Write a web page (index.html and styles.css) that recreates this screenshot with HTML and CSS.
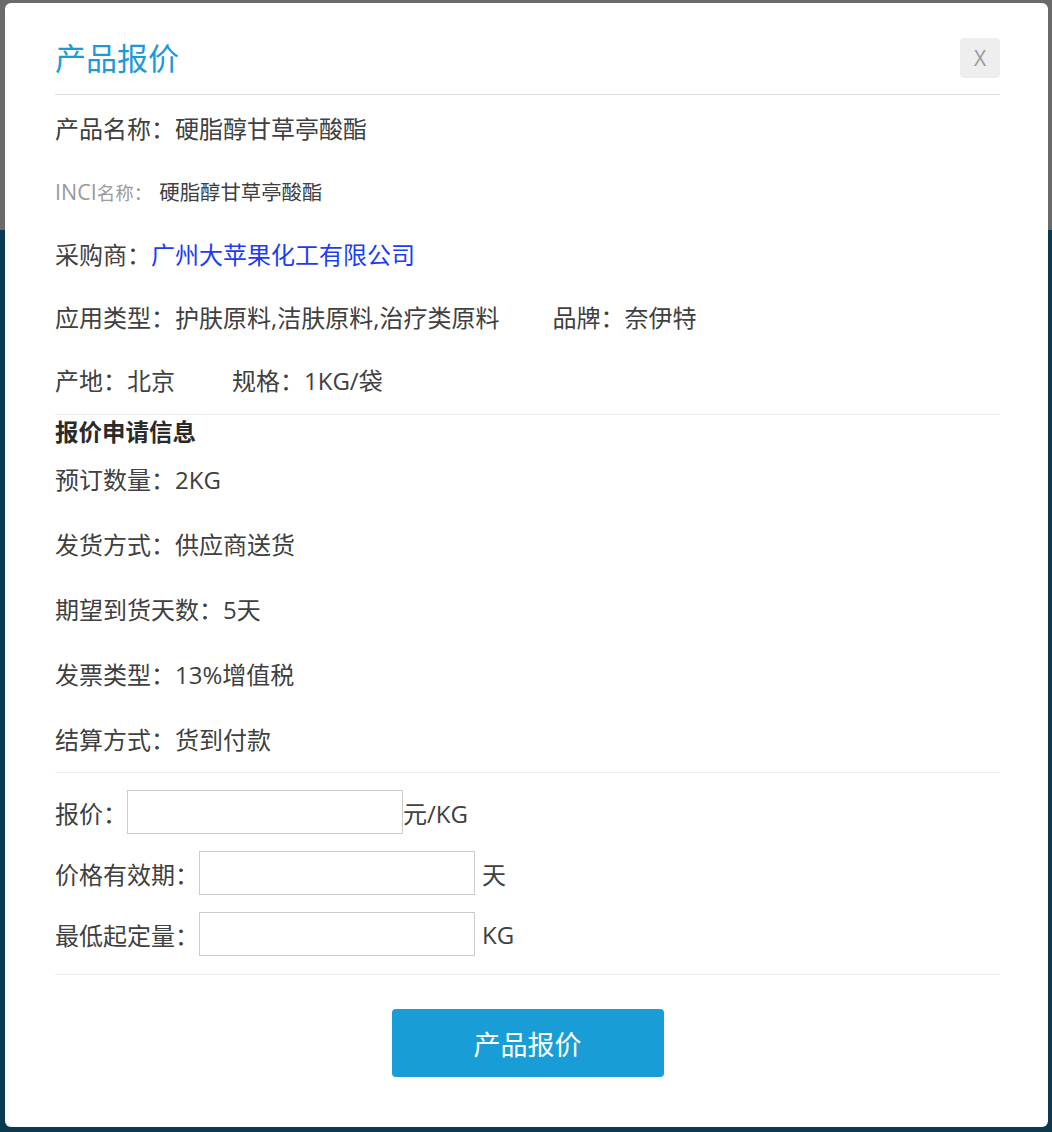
FILE: index.html
```html
<!DOCTYPE html>
<html lang="zh-CN">
<head>
<meta charset="utf-8">
<title>产品报价</title>
<link rel="stylesheet" href="styles.css">
</head>
<body>
<div class="backdrop">
  <div class="modal">
    <div class="modal-header">
      <h2 class="title">产品报价</h2>
      <button class="close" type="button">X</button>
    </div>
    <div class="info">
      <p class="row">产品名称：硬脂醇甘草亭酸酯</p>
      <p class="row inci"><span class="muted"><span class="latin">INCI</span>名称：</span><span class="inci-value">硬脂醇甘草亭酸酯</span></p>
      <p class="row">采购商：<a class="link" href="#">广州大苹果化工有限公司</a></p>
      <p class="row">应用类型：护肤原料,洁肤原料,治疗类原料<span class="sep sep-brand">品牌：奈伊特</span></p>
      <p class="row">产地：北京<span class="sep">规格：1KG/袋</span></p>
    </div>
    <div class="request">
      <h3 class="section-title">报价申请信息</h3>
      <p class="row">预订数量：2KG</p>
      <p class="row">发货方式：供应商送货</p>
      <p class="row">期望到货天数：5天</p>
      <p class="row">发票类型：13%增值税</p>
      <p class="row">结算方式：货到付款</p>
    </div>
    <form class="quote">
      <div class="field"><label>报价：</label><input type="text"><span class="unit tight">元/KG</span></div>
      <div class="field"><label>价格有效期：</label><input type="text"><span class="unit">天</span></div>
      <div class="field"><label>最低起定量：</label><input type="text"><span class="unit">KG</span></div>
    </form>
    <div class="actions">
      <button class="submit" type="button">产品报价</button>
    </div>
  </div>
</div>
</body>
</html>
```
FILE: styles.css
```css
* { box-sizing: border-box; }
html, body { margin: 0; padding: 0; }
body {
  font-family: "Open Sans", "Noto Sans CJK SC", sans-serif;
  color: #404040;
  background: #0b3a50;
}
.backdrop {
  min-height: 1132px;
  padding: 3px 4px 4px 5px;
  background: linear-gradient(to bottom, #6a6a6a 0, #6a6a6a 230px, #0b3a50 230px, #0b3a50 100%);
}
.modal {
  background: #fff;
  border-radius: 6px;
  padding: 0 48px 50px 50px;
}
.modal-header {
  display: flex;
  align-items: center;
  justify-content: space-between;
  padding-top: 34px;
  padding-bottom: 15px;
  border-bottom: 1px solid #dddddd;
}
.title {
  margin: 0;
  height: 42px;
  line-height: 42px;
  font-size: 31px;
  font-weight: normal;
  color: #1a9bd7;
}
.close {
  width: 40px;
  height: 40px;
  border: none;
  border-radius: 4px;
  background: #eeeeee;
  color: #9a9a9a;
  font-family: "Open Sans", sans-serif;
  font-size: 21px;
  padding: 0;
  cursor: pointer;
}
.row {
  margin: 0;
  height: 36px;
  line-height: 36px;
  font-size: 24px;
  white-space: nowrap;
}
.info {
  display: flex;
  flex-direction: column;
  gap: 27px;
  padding-top: 16px;
  padding-bottom: 15px;
  border-bottom: 1px solid #eeeeee;
}
.inci { font-size: 20px; }
.muted { color: #9a9a9a; font-size: 18.5px; }
.latin { font-size: 21.5px; }
.inci-value { margin-left: 7px; font-size: 20.4px; }
.link { color: #1a3cf5; text-decoration: none; }
.sep { margin-left: 57px; }
.sep-brand { margin-left: 53px; }
.request {
  display: flex;
  flex-direction: column;
  gap: 29px;
  padding-top: 2px;
  padding-bottom: 14px;
  border-bottom: 1px solid #eeeeee;
}
.section-title {
  margin: 0 0 -14px 0;
  height: 30px;
  line-height: 30px;
  font-size: 23.5px;
  font-weight: bold;
  color: #2a2a2a;
}
.quote {
  display: flex;
  flex-direction: column;
  gap: 17px;
  padding-top: 17px;
  padding-bottom: 18px;
  border-bottom: 1px solid #eeeeee;
}
.field {
  display: flex;
  align-items: center;
  height: 44px;
  font-size: 24px;
}
.field input {
  width: 276px;
  height: 44px;
  border: 1px solid #cccccc;
  padding: 0 8px;
  font-size: 18px;
  outline: none;
}
.unit { margin-left: 7px; }
.unit.tight { margin-left: 0; }
.actions {
  display: flex;
  justify-content: center;
  padding-top: 34px;
}
.submit {
  width: 272px;
  height: 68px;
  border: none;
  border-radius: 4px;
  background: #189dd6;
  color: #ffffff;
  font-family: "Noto Sans CJK SC", sans-serif;
  font-size: 27px;
  cursor: pointer;
}
```
